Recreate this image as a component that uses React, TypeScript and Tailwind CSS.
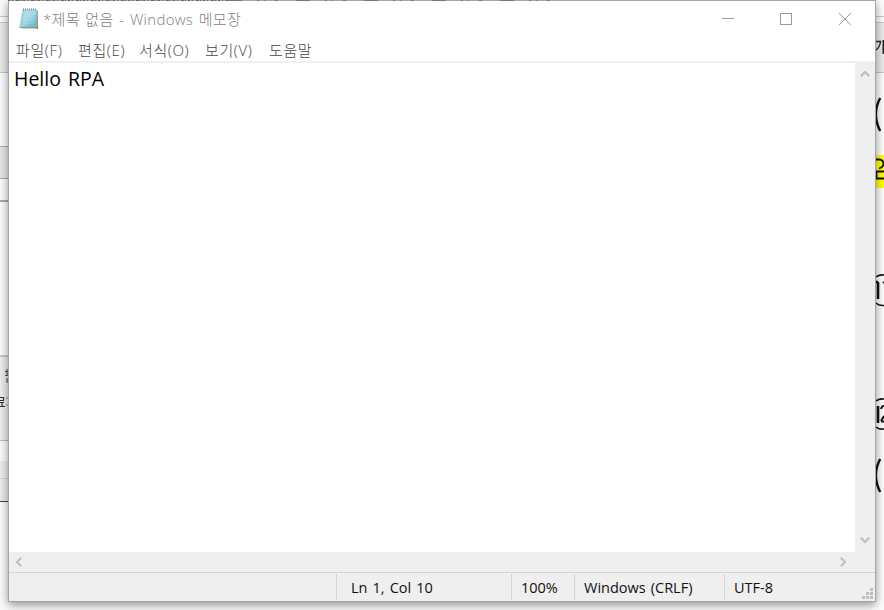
import React from 'react';

const LATIN_KR = "font-['Open_Sans','Noto_Sans_CJK_KR',sans-serif]";

const menus = [
  { label: '파일', key: '(F)', box: 'w-[62px]' },
  { label: '편집', key: '(E)', box: 'w-[61px]' },
  { label: '서식', key: '(O)', box: 'w-[66px]' },
  { label: '보기', key: '(V)', box: 'w-[64px]' },
  { label: '도움말', key: '', box: 'w-[60px]' },
];

function NotepadIcon() {
  return (
    <svg width="20" height="22" viewBox="0 0 20 22" className="shrink-0">
      <defs>
        <linearGradient id="paper" x1="0" y1="0" x2="1" y2="1">
          <stop offset="0" stopColor="#c5e7ee" />
          <stop offset="0.5" stopColor="#a0d6e2" />
          <stop offset="1" stopColor="#55aec5" />
        </linearGradient>
      </defs>
      <path d="M4 2.500H19V18.500L17 20.500H3Z" fill="#b09c79" />
      <path d="M3.500 1.500H18L17 19.500H0.500Z" fill="url(#paper)" />
      <path d="M3.500 1.500L0.500 19.500H3L6 1.500Z" fill="#8bcbd8" opacity=".6" />
      <path d="M4 6H17M3.500 9H17M3 12H16.500M2.500 15H16" stroke="#e0f3f6" strokeWidth=".5" opacity=".5" />
      <path d="M4 1.500H18" stroke="#84989e" strokeWidth="2" strokeDasharray="1 1" />
      <path d="M.5 19.500H17" stroke="#679eaa" strokeWidth=".8" />
      <path d="M17 20.500L19 18V21Z" fill="#8c6b42" />
    </svg>
  );
}

function Chevron({ turn }: { turn: string }) {
  return (
    <svg width="10" height="10" viewBox="0 0 10 10" className={turn}>
      <path d="M0.800 7.200L5 3L9.200 7.200" fill="none" stroke="#bfbfbf" strokeWidth="2.200" />
    </svg>
  );
}

function LeftStrip() {
  return (
    <div className="flex h-[610px] w-2 shrink-0 flex-col overflow-hidden bg-[#fbfbfb]">
      <div className="h-[17px] border-b border-[#c8c8c8]" />
      <div className="h-[6px] border-b border-[#c8c8c8]" />
      <div className="h-[50px] border-b border-[#c2c2c2] bg-[#e8e8e8]" />
      <div className="h-[74px] border-b border-[#aaa]" />
      <div className="h-[32px] border-b border-[#aaa] bg-[#e6e6e6]" />
      <div className="h-[23px] border-b-2 border-[#a7a7a7]" />
      <div className="h-[155px] border-b-2 border-[#c5c5c5]" />
      <div className="relative h-[84px] border-b border-[#bbb] bg-[#ececec]">
        <svg width="8" height="60" className="absolute left-0 top-0">
          <path d="M5 14.500H8M5 18.500H8M7 12V18M7 21V25H8" fill="none" stroke="#555" strokeWidth="1.200" />
          <path d="M0 40.500H3.500V43.500H0M0 45.500H4M0 49.500H5M2 46V49" fill="none" stroke="#333" strokeWidth="1.200" />
          <path d="M7 40V42M7 47V49" stroke="#888" />
        </svg>
      </div>
      <div className="h-[20px]" />
      <div className="h-[18px] border-b border-[#d3d3d3] bg-[#ededed]" />
      <div className="h-[23px] border-b border-[#444] bg-[#ececec]" />
    </div>
  );
}

function RightStrip() {
  return (
    <div className="flex h-[610px] w-2 shrink-0 flex-col bg-[#fcfcfc]">
      <div className="h-[17px] border-b border-[#c5c5c5]" />
      <div className="h-[6px] border-b border-[#c5c5c5]" />
      <div className="h-[50px] border-b border-[#c4c4c4] bg-[#e9e9e9]">
        <svg width="8" height="49">
          <path d="M0 18.500H4.500Q4 24 0 27" fill="none" stroke="#222" strokeWidth="1.300" />
          <path d="M7.500 17V31" stroke="#222" strokeWidth="2" />
        </svg>
      </div>
      <div className="h-[82px]">
        <svg width="8" height="82">
          <path d="M4.200 25Q-4.500 41 4.200 58" fill="none" stroke="#111" strokeWidth="2.400" />
        </svg>
      </div>
      <div className="h-[33px] bg-[#ffff00]">
        <svg width="8" height="33">
          <path d="M0 4.500H3Q7.500 5 7.500 8.500Q7.500 12 3 13.500M0 16.500H8M0 23.500H8M.5 17V24" fill="none" stroke="#111" strokeWidth="1.800" />
        </svg>
      </div>
      <div className="h-[422px]">
        <svg width="8" height="422">
          <g fill="none" stroke="#111">
            <path d="M0 89Q3 86.500 8 87M0 115Q3 118 8 117.500" strokeWidth="1.600" />
            <path d="M2 94V111M0 94H2" strokeWidth="2.600" />
            <path d="M7 95L8 94" strokeWidth="2" />
            <path d="M0 213Q3 210.500 8 211M0 239Q3 241.500 8 241" strokeWidth="1.600" />
            <path d="M2 218V235" strokeWidth="2.600" />
            <path d="M5 221Q6 217.500 8 218M5 233.500H8M5 233L8 228" strokeWidth="2" />
            <path d="M4.200 271Q-4.500 287 4.200 304" strokeWidth="2.400" />
          </g>
        </svg>
      </div>
    </div>
  );
}

export default function App() {
  return (
    <div className={`flex h-[610px] w-[884px] overflow-hidden bg-[#fcfcfc] text-[15px] ${LATIN_KR}`}>
      <LeftStrip />
      <main className="relative z-10 flex h-[602px] w-[868px] shrink-0 flex-col border border-[#a5a5a5] bg-white shadow-[0_3px_9px_rgba(0,0,0,0.42)]">
        <svg width="550" height="1" className="absolute -left-px -top-px">
          <path d="M0 .5H220" stroke="#666" strokeDasharray="2 2 1 3 3 1 1 2" />
          <path d="M220 .5H550" stroke="#777" strokeDasharray="14 15 2 5 1 10 3 18" />
        </svg>
        <header className="flex h-[36px] shrink-0 items-center text-[#808080]">
          <div className="ml-[10px] flex"><NotepadIcon /></div>
          <h1 className="ml-1 w-[220px] whitespace-pre text-[15px] font-light leading-[20px] tracking-[0.3px] [word-spacing:1.400px]">*제목 없음 - Windows 메모장</h1>
          <div className="ml-auto mr-[24px] flex items-center gap-[46px]">
            <svg width="12" height="12"><path d="M0 5.500H12" stroke="#999" /></svg>
            <svg width="12" height="12"><rect x=".5" y=".5" width="11" height="11" fill="none" stroke="#999" /></svg>
            <svg width="12" height="12" className="ml-px"><path d="M0 0L12 12M12 0L0 12" stroke="#999" /></svg>
          </div>
        </header>
        <nav className="flex h-[26px] shrink-0 border-b-2 border-[#f0f0f0] pl-[7px] font-light text-[#444]">
          {menus.map((m) => (
            <span key={m.label} className={`whitespace-nowrap leading-[26px] tracking-[0.6px] ${m.box}`}>
              {m.label}<span>{m.key}</span>
            </span>
          ))}
        </nav>
        <div className="flex h-[489px] shrink-0">
          <div className="flex-1 pl-[5px] text-[19.500px] leading-[32px] text-black [word-spacing:2px]">Hello RPA</div>
          <div className="flex w-[20px] flex-col items-center justify-between bg-[#efefef] pb-[7px] pr-px pt-[6px]">
            <Chevron turn="" />
            <Chevron turn="rotate-180" />
          </div>
        </div>
        <div className="flex h-[20px] shrink-0 items-center justify-between bg-[#efefef] pb-px pl-[5px] pr-[27px]">
          <Chevron turn="-rotate-90" />
          <Chevron turn="rotate-90" />
        </div>
        <footer className="relative flex h-[29px] shrink-0 border-t border-[#d5d5d5] bg-[#efefef] pb-px pt-px text-[14.500px] leading-[27px] text-[#111] [word-spacing:1.300px]">
          <div className="w-[327px]" />
          <div className="w-[175px] border-l border-[#d5d5d5] pl-[14px]">Ln 1, Col 10</div>
          <div className="w-[63px] border-l border-[#d5d5d5] pl-[9px]">100%</div>
          <div className="w-[150px] border-l border-[#d5d5d5] pl-[9px]">Windows (CRLF)</div>
          <div className="flex-1 border-l border-[#d5d5d5] pl-[9px]">UTF-8</div>
          <svg width="11" height="11" className="absolute bottom-[2px] right-[2px]" fill="#bfbfbf">
            <path d="M8 0h3v3H8zM8 4h3v3H8zM8 8h3v3H8zM4 4h3v3H4zM4 8h3v3H4zM0 8h3v3H0z" />
          </svg>
        </footer>
      </main>
      <RightStrip />
    </div>
  );
}
